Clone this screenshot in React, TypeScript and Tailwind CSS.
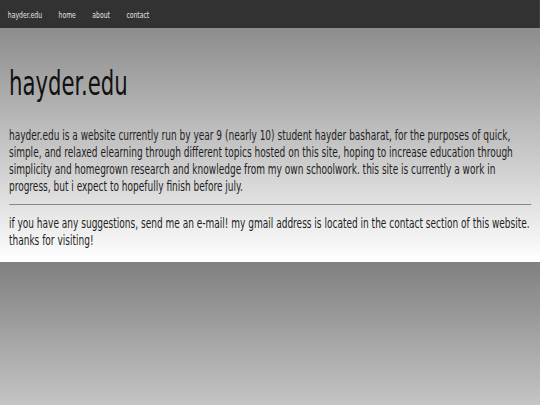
const links = ["hayder.edu", "home", "about", "contact"];

function Nav() {
  return (
    <nav className="flex h-[28px] items-center gap-[23px] bg-[#323232] pl-[11px] pt-[1px] text-[9.5px] text-[#e2e2e2]">
      {links.map((l) => (
        <a key={l} href="#" className="leading-none">
          {l}
        </a>
      ))}
    </nav>
  );
}

export default function App() {
  return (
    <div
      className="flex h-screen flex-col overflow-hidden"
      style={{ fontFamily: '"DejaVu Sans Condensed", "DejaVu Sans", sans-serif' }}
    >
      <div className="h-[262px] shrink-0 bg-gradient-to-b from-[#808080] to-white">
        {/* the page text is set in a narrow face: condense the whole column */}
        <div className="w-[755px] origin-top-left scale-x-[0.715]">
          <Nav />
          <main className="px-[12.5px] pt-[38px] text-[#1e1e1e]">
            <h1 className="text-[33px] leading-[36px] text-[#111]">hayder.edu</h1>
            <p className="mt-[25px] text-[14px] leading-[17px]">
              hayder.edu is a website currently run by year 9 (nearly 10) student hayder basharat, for the
              purposes of quick, simple, and relaxed elearning through different topics hosted on this site,
              hoping to increase education through simplicity and homegrown research and knowledge from my
              own schoolwork. this site is currently a work in progress, but i expect to hopefully finish
              before july.
            </p>
            <hr className="mt-[9px] border-t border-[#858585]" />
            <p className="mt-[10px] text-[14px] leading-[17px]">
              if you have any suggestions, send me an e-mail! my gmail address is located in the contact
              section of this website. thanks for visiting!
            </p>
          </main>
        </div>
      </div>
      <div className="flex-1 bg-gradient-to-b from-[#808080] to-[#c5c5c5]" />
    </div>
  );
}
